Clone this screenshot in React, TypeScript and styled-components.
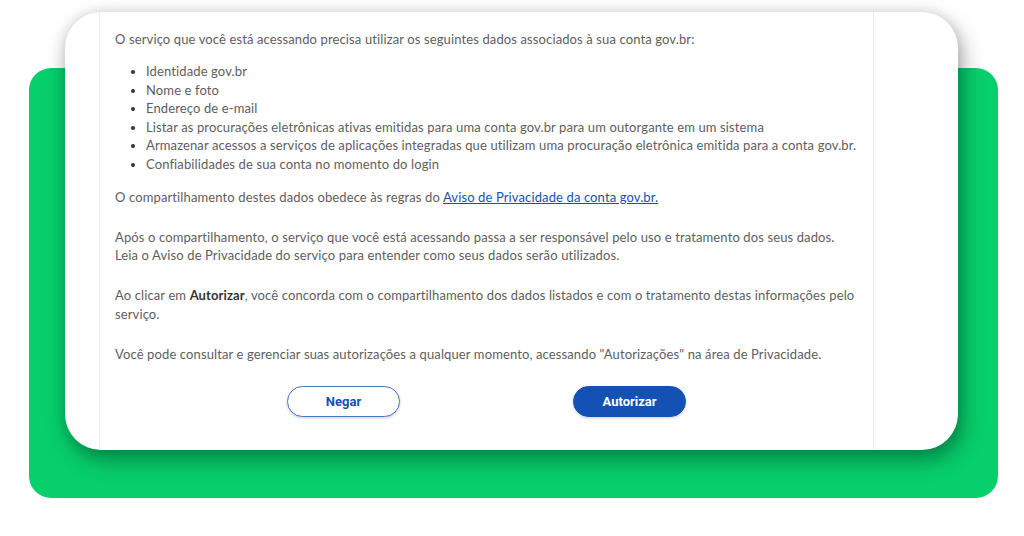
import React from 'react';
import styled, {createGlobalStyle} from 'styled-components';

const GlobalStyle = createGlobalStyle`
    * {
        box-sizing: border-box;
    }

    html, body {
        margin: 0;
        padding: 0;
        background: #fff;
    }

    body {
        width: 1024px;
        height: 536px;
        overflow: hidden;
    }
`;

const items = [
    'Identidade gov.br',
    'Nome e foto',
    'Endereço de e-mail',
    'Listar as procurações eletrônicas ativas emitidas para uma conta gov.br para um outorgante em um sistema',
    'Armazenar acessos a serviços de aplicações integradas que utilizam uma procuração eletrônica emitida para a conta gov.br.',
    'Confiabilidades de sua conta no momento do login',
];

const App: React.FC = () => {
    return (
        <>
            <GlobalStyle/>
            <Stage>
                <GreenPanel/>
                <Card>
                    <Page>
                        <Text $gap={13.5}>
                            O serviço que você está acessando precisa utilizar os seguintes dados associados à sua conta gov.br:
                        </Text>
                        <List>
                            {items.map(item => <li key={item}>{item}</li>)}
                        </List>
                        <Text $gap={21.5}>
                            O compartilhamento destes dados obedece às regras do{' '}
                            <Link href="#">Aviso de Privacidade da conta gov.br.</Link>
                        </Text>
                        <Text $gap={21.5}>
                            Após o compartilhamento, o serviço que você está acessando passa a ser responsável pelo uso e tratamento dos seus dados.
                            <br/>
                            Leia o Aviso de Privacidade do serviço para entender como seus dados serão utilizados.
                        </Text>
                        <Text $gap={21.5}>
                            Ao clicar em <Strong>Autorizar</Strong>, você concorda com o compartilhamento dos dados listados e com o tratamento destas informações pelo serviço.
                        </Text>
                        <Text $gap={22.75}>
                            Você pode consultar e gerenciar suas autorizações a qualquer momento, acessando "Autorizações" na área de Privacidade.
                        </Text>
                        <Actions>
                            <Button $primary={false}>Negar</Button>
                            <Button $primary>Autorizar</Button>
                        </Actions>
                    </Page>
                </Card>
            </Stage>
        </>
    );
};

export default App;

const Stage = styled.div`
    display: grid;
    width: 1024px;
    height: 536px;

    & > * {
        grid-area: 1 / 1;
    }
`;

const GreenPanel = styled.div`
    margin: 68px 0 0 29px;
    width: 969px;
    height: 430px;
    border-radius: 22px;
    background: #07cf6c;
`;

const Card = styled.div`
    margin: 12px 0 0 65px;
    width: 893px;
    height: 438px;
    border-radius: 36px;
    background: #fff;
    box-shadow: 4px 10px 22px rgba(0, 0, 0, 0.34), 0 0 14px rgba(0, 0, 0, 0.12);
    overflow: hidden;
    padding-left: 34px;
`;

const Page = styled.div`
    width: 775px;
    height: 100%;
    border-left: 1px solid #ececec;
    border-right: 1px solid #ececec;
    padding: 18px 0 0 15px;
    font-family: Lato, "Open Sans", sans-serif;
    font-size: 13px;
    letter-spacing: 0.12px;
    line-height: 18.5px;
    color: #5e5e5e;
`;

const Text = styled.p<{ $gap: number }>`
    margin: 0 0 ${props => props.$gap}px;
`;

const Strong = styled.b`
    color: #333;
    font-weight: 700;
`;

const List = styled.ul`
    margin: 0 0 14.5px;
    padding-left: 31px;

    li::marker {
        color: #333;
    }
`;

const Link = styled.a`
    color: #1351b4;
    text-decoration: underline;
`;

const Actions = styled.div`
    display: flex;
    justify-content: center;
    gap: 173px;
    padding-right: 15px;
`;

const Button = styled.button<{ $primary: boolean }>`
    width: 113px;
    height: 31px;
    border-radius: 16px;
    border: 1px solid ${props => props.$primary ? '#1351b4' : '#4a78c8'};
    background: ${props => props.$primary ? '#1351b4' : '#fff'};
    color: ${props => props.$primary ? '#fff' : '#1351b4'};
    font-family: Roboto, "Liberation Sans", sans-serif;
    font-size: 13px;
    font-weight: 700;
    box-shadow: 0 1px 3px rgba(0, 0, 0, 0.2);
    cursor: pointer;
`;
